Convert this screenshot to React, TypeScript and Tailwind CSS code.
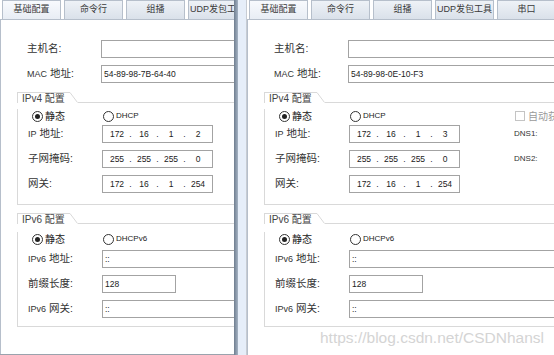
import React from 'react';

type WinProps = {
  tabs: string[];
  mac: string;
  ip: string[];
  focused?: boolean;
  extras?: boolean;
  className: string;
};

const inputBase = 'h-[18px] shrink-0 border border-[#a3a3a3] bg-white text-[8.5px] leading-[16px] text-[#222]';

// latin part of a label is set smaller than the CJK part
function L({ children }: { children: React.ReactNode }) {
  return <span className="text-[9px]">{children}</span>;
}

function Field({ label, children }: { label: React.ReactNode; children: React.ReactNode }) {
  return (
    <div className="flex h-[18px] items-center">
      <span className="w-[74px] shrink-0 text-[10.5px] text-[#333]">{label}</span>
      {children}
    </div>
  );
}

function IpBox({ parts }: { parts: string[] }) {
  return (
    <div className={`${inputBase} flex w-[111px] pl-[2px]`}>
      {parts.map((p, i) => (
        <React.Fragment key={i}>
          {i > 0 && <span className="w-[3px] text-center">.</span>}
          <span className="w-[24px] text-center">{p}</span>
        </React.Fragment>
      ))}
    </div>
  );
}

function TextBox({ value, w, focused }: { value: string; w: string; focused?: boolean }) {
  return (
    <div className={`${inputBase} ${w} pl-[2px] ${focused ? 'border-[#7db2e8]' : ''}`}>{value}</div>
  );
}

function Radio({ checked, label, w }: { checked?: boolean; label: string; w: string }) {
  return (
    <div className={`flex items-center gap-[2px] ${w} shrink-0`}>
      <span className="flex h-[11px] w-[11px] items-center justify-center rounded-full border border-[#333] bg-white">
        {checked && <span className="h-[5px] w-[5px] rounded-full bg-[#222]" />}
      </span>
      <span className={checked ? 'text-[10px] text-[#222]' : 'text-[8px] text-[#222]'}>{label}</span>
    </div>
  );
}

function Group({ title, children }: { title: string; children: React.ReactNode }) {
  return (
    <div className="ml-[16px] w-[330px] shrink-0">
      <div className="flex h-[11px]">
        <div className="w-[53px] whitespace-nowrap border-l border-t border-[#d9d9d9] pl-[4px] pt-[1px] text-[10px] leading-[10px] text-[#444]">
          {title}
        </div>
        <svg width="8" height="11" className="shrink-0">
          <path d="M0 0.5 L7.5 10.5" stroke="#d9d9d9" strokeWidth="1" fill="none" />
        </svg>
        <div className="flex-1 border-b border-[#d9d9d9]" />
      </div>
      <div className="border-b border-l border-[#d9d9d9] pl-[10px]">{children}</div>
    </div>
  );
}

function Window({ tabs, mac, ip, focused, extras, className }: WinProps) {
  return (
    <div className={`flex h-full flex-col overflow-hidden ${className}`}>
      <div className="flex h-[19px] shrink-0 gap-[3px] pl-[2px]">
        {tabs.map((t, i) => (
          <div
            key={t}
            className={`flex h-full w-[59px] shrink-0 items-center justify-center overflow-hidden whitespace-nowrap border border-b-0 border-[#b6bfcb] text-[9px] text-[#3a3a3a] ${
              i === 0 ? 'bg-gradient-to-b from-[#f8fafd] to-[#e8edf4]' : 'bg-gradient-to-b from-[#eef2f7] to-[#dae1ea]'
            }`}
          >
            {t}
          </div>
        ))}
      </div>
      <div className="flex flex-1 flex-col border-l border-t border-[#b6bfcb] bg-white pt-[20px]">
        <div className="flex w-[340px] flex-col gap-[7px] pl-[26px]">
          <Field label="主机名:">
            <TextBox value="" w="w-[230px]" focused={focused} />
          </Field>
          <Field label={<><L>MAC</L> 地址:</>}>
            <TextBox value={mac} w="w-[230px]" />
          </Field>
        </div>

        <div className="mt-[9px]">
          <Group title="IPv4 配置">
            <div className="mt-[6px] flex h-[14px] items-center pl-[4px]">
              <Radio checked label="静态" w="w-[71px]" />
              <Radio label="DHCP" w="w-[165px]" />
              {extras && (
                <div className="flex items-center gap-[3px] whitespace-nowrap">
                  <span className="h-[10px] w-[10px] border border-[#c4c4c4] bg-white" />
                  <span className="text-[10px] text-[#9a9a9a]">自动获取</span>
                </div>
              )}
            </div>
            <div className="mt-[2px] flex flex-col gap-[7px] pb-[11px]">
              <Field label={<><L>IP</L> 地址:</>}>
                <IpBox parts={['172', '16', '1', ip[0]]} />
                {extras && <span className="ml-[54px] text-[8px] text-[#333]">DNS1:</span>}
              </Field>
              <Field label="子网掩码:">
                <IpBox parts={['255', '255', '255', '0']} />
                {extras && <span className="ml-[54px] text-[8px] text-[#333]">DNS2:</span>}
              </Field>
              <Field label="网关:">
                <IpBox parts={['172', '16', '1', '254']} />
              </Field>
            </div>
          </Group>
        </div>

        <div className="mt-[8px]">
          <Group title="IPv6 配置">
            <div className="mt-[8px] flex h-[14px] items-center pl-[4px]">
              <Radio checked label="静态" w="w-[71px]" />
              <Radio label="DHCPv6" w="w-[165px]" />
            </div>
            <div className="mt-[4px] flex flex-col gap-[7px] pb-[8px]">
              <Field label={<><L>IPv6</L> 地址:</>}>
                <TextBox value="::" w="w-[230px]" />
              </Field>
              <Field label="前缀长度:">
                <TextBox value="128" w="w-[74px]" />
              </Field>
              <Field label={<><L>IPv6</L> 网关:</>}>
                <TextBox value="::" w="w-[230px]" />
              </Field>
            </div>
          </Group>
        </div>
        <div className="flex-1" />
      </div>
    </div>
  );
}

export default function App() {
  return (
    <div className="relative flex h-[355px] w-[554px] overflow-hidden bg-white font-[family-name:'Liberation_Sans','Noto_Sans_CJK_SC',sans-serif]">
      <Window
        className="w-[234px] shrink-0 border-b border-[#9aa3ad]"
        tabs={['基础配置', '命令行', '组播', 'UDP发包工具']}
        mac="54-89-98-7B-64-40"
        ip={['2']}
      />
      <div className="flex w-[12px] shrink-0">
        <div className="w-[4px] bg-gradient-to-r from-[#6f7e90] to-[#a5b3c3]" />
        <div className="flex-1 bg-[#e6eef9]" />
      </div>
      <Window
        className="flex-1 border-l border-[#c7ccd3]"
        tabs={['基础配置', '命令行', '组播', 'UDP发包工具', '串口']}
        mac="54-89-98-0E-10-F3"
        ip={['3']}
        focused
        extras
      />
      <span className="pointer-events-none absolute left-[320px] top-[326px] text-[15.5px] text-[#d4d4d4]">
        https://blog.csdn.net/CSDNhansl
      </span>
    </div>
  );
}
